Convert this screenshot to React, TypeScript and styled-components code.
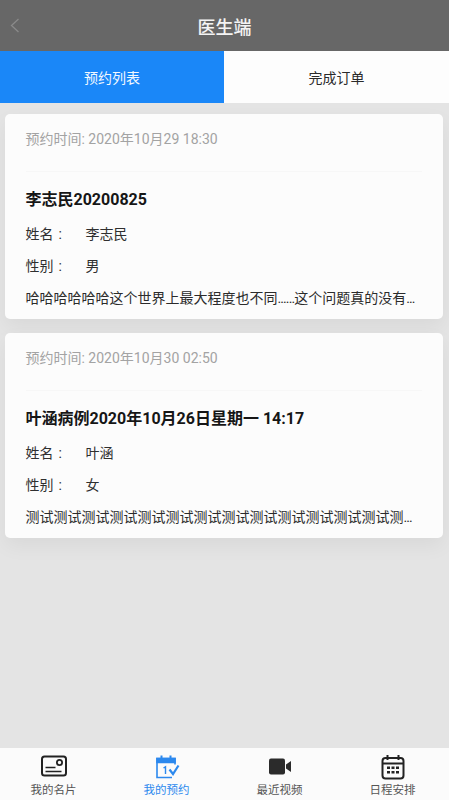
import * as React from 'react';
import styled, { createGlobalStyle } from 'styled-components';

const FONT = `Roboto, "Noto Sans CJK SC", sans-serif`;
const BLUE = '#1a87f8';

const GlobalStyle = createGlobalStyle`
  html, body {
    margin: 0;
    padding: 0;
    height: 100%;
    background: #e4e4e4;
    font-family: ${FONT};
  }
  #root {
    height: 100%;
  }
`;

const Page = styled.div`
  display: flex;
  flex-direction: column;
  height: 800px;
  overflow: hidden;
  background: #e4e4e4;
`;

const Header = styled.header`
  display: flex;
  align-items: center;
  justify-content: center;
  position: relative;
  flex: 0 0 51px;
  background: #676767;
  color: #f4f4f4;
  font-size: 18px;
  font-weight: 500;
`;

const BackIcon = styled.svg`
  position: absolute;
  left: 9px;
  top: 17px;
  width: 11px;
  height: 17px;
`;

const Tabs = styled.nav`
  display: grid;
  grid-template-columns: 224px 1fr;
  flex: 0 0 52px;
`;

const Tab = styled.div<{ $active?: boolean }>`
  display: flex;
  align-items: center;
  justify-content: center;
  font-size: 14px;
  background: ${(p) => (p.$active ? BLUE : '#fdfdfd')};
  color: ${(p) => (p.$active ? '#f2f8ff' : '#2a2a2a')};
`;

const List = styled.main`
  flex: 1;
  display: flex;
  flex-direction: column;
  gap: 14.5px;
  padding: 10.5px 6px 0 5px;
`;

const Card = styled.article`
  display: flex;
  flex-direction: column;
  height: 205px;
  box-sizing: border-box;
  padding: 0 21px 0 20.5px;
  background: #fcfcfc;
  border-radius: 5px;
  box-shadow: 0 8px 20px rgba(0, 0, 0, 0.05);
`;

const Time = styled.div`
  flex: 0 0 48px;
  display: flex;
  align-items: center;
  font-size: 14px;
  color: #a3a3a3;
`;

const Divider = styled.div`
  flex: 0 0 1px;
  margin-top: 9px;
  background: #f7f7f7;
`;

const Title = styled.h2`
  margin: 16px 0 5px;
  font-size: 16px;
  line-height: 24px;
  font-weight: 700;
  color: #161616;
`;

const Field = styled.div`
  display: flex;
  align-items: center;
  height: 32px;
  font-size: 14px;
  color: #2f2f2f;
`;

const FieldLabel = styled.span`
  flex: 0 0 60px;
`;

const Colon = styled.span`
  margin-left: 5px;
`;

const Summary = styled.p`
  margin: 2px 0 0;
  font-size: 14px;
  line-height: 30px;
  color: #2b2b2b;
  white-space: nowrap;
`;

const Dots = styled.span`
  letter-spacing: -0.9px;
`;

const BottomBar = styled.footer`
  flex: 0 0 52px;
  display: grid;
  grid-template-columns: repeat(4, 113px);
  margin-left: -3px;
  background: #fbfbfb;
`;

const BarItem = styled.div<{ $active?: boolean }>`
  display: flex;
  flex-direction: column;
  align-items: center;
  padding-top: 6px;
  font-size: 11.5px;
  line-height: 14px;
  gap: 3px;
  color: ${(p) => (p.$active ? '#2c89ee' : '#555555')};
`;

const IconBox = styled.svg`
  display: block;
  width: 26px;
  height: 26px;
`;

const CardIcon = () => (
  <IconBox viewBox="0 0 26 26" fill="none" stroke="#222" strokeWidth="2">
    <rect x="1" y="2.5" width="24" height="19" rx="2.5" />
    <path d="M4.5 13.5h10M4.5 17.5h16" strokeWidth="1.6" />
    <circle cx="18.5" cy="8.5" r="2.6" strokeWidth="1.8" />
  </IconBox>
);

const BookingIcon = () => (
  <IconBox viewBox="0 0 26 26" fill="none" stroke="#2c89ee" strokeWidth="1.6">
    <path d="M21 10.5V4.5H3v19h15" />
    <path d="M3 4.5h18v4H3z" fill="#2c89ee" />
    <path d="M7.5 1.5v4M16.5 1.5v4" strokeWidth="2" />
    <path d="M9.5 14l2-1.2V20" strokeWidth="1.4" />
    <path d="M15.5 15.5l3.5 4.5 5.5-8.5" strokeWidth="2.2" />
  </IconBox>
);

const VideoIcon = () => (
  <IconBox viewBox="0 0 26 26">
    <rect x="2" y="4.5" width="16" height="16" rx="2" fill="#2b2b2b" />
    <path d="M19 10.5l5-3.5v11l-5-3.5z" fill="#2b2b2b" />
  </IconBox>
);

const ScheduleIcon = () => (
  <IconBox viewBox="0 0 26 26" fill="none" stroke="#222" strokeWidth="2">
    <rect x="2.5" y="4" width="21" height="20.5" rx="3" />
    <path d="M2.5 9.5h21" />
    <path d="M7.5 1v5M18.5 1v5" />
    <path
      d="M7 12.5h3V15H7zM11.5 12.5h3V15h-3zM16 12.5h3V15h-3zM7 17h3v2.5H7zM11.5 17h3v2.5h-3zM16 17h3v2.5h-3z"
      fill="#222"
      stroke="none"
    />
  </IconBox>
);

const appointments = [
  {
    time: '预约时间: 2020年10月29 18:30',
    title: '李志民20200825',
    name: '李志民',
    gender: '男',
    summary: (
      <>
        哈哈哈哈哈哈这个世界上最大程度也不同<Dots>......</Dots>这个问题真的没有<Dots>...</Dots>
      </>
    ),
  },
  {
    time: '预约时间: 2020年10月30 02:50',
    title: '叶涵病例2020年10月26日星期一 14:17',
    name: '叶涵',
    gender: '女',
    summary: (
      <>
        测试测试测试测试测试测试测试测试测试测试测试测试测试测<Dots>...</Dots>
      </>
    ),
  },
];

export default function App(): React.JSX.Element {
  return (
    <Page>
      <GlobalStyle />
      <Header>
        <BackIcon viewBox="0 0 11 17" fill="none" stroke="#8a8a8a" strokeWidth="1.3">
          <path d="M9.5 2L2.5 8.5l7 6.5" />
        </BackIcon>
        医生端
      </Header>
      <Tabs>
        <Tab $active>预约列表</Tab>
        <Tab>完成订单</Tab>
      </Tabs>
      <List>
        {appointments.map((item) => (
          <Card key={item.title}>
            <Time>{item.time}</Time>
            <Divider />
            <Title>{item.title}</Title>
            <Field>
              <FieldLabel>
                姓名<Colon>:</Colon>
              </FieldLabel>
              {item.name}
            </Field>
            <Field>
              <FieldLabel>
                性别<Colon>:</Colon>
              </FieldLabel>
              {item.gender}
            </Field>
            <Summary>{item.summary}</Summary>
          </Card>
        ))}
      </List>
      <BottomBar>
        <BarItem>
          <CardIcon />
          我的名片
        </BarItem>
        <BarItem $active>
          <BookingIcon />
          我的预约
        </BarItem>
        <BarItem>
          <VideoIcon />
          最近视频
        </BarItem>
        <BarItem>
          <ScheduleIcon />
          日程安排
        </BarItem>
      </BottomBar>
    </Page>
  );
}
